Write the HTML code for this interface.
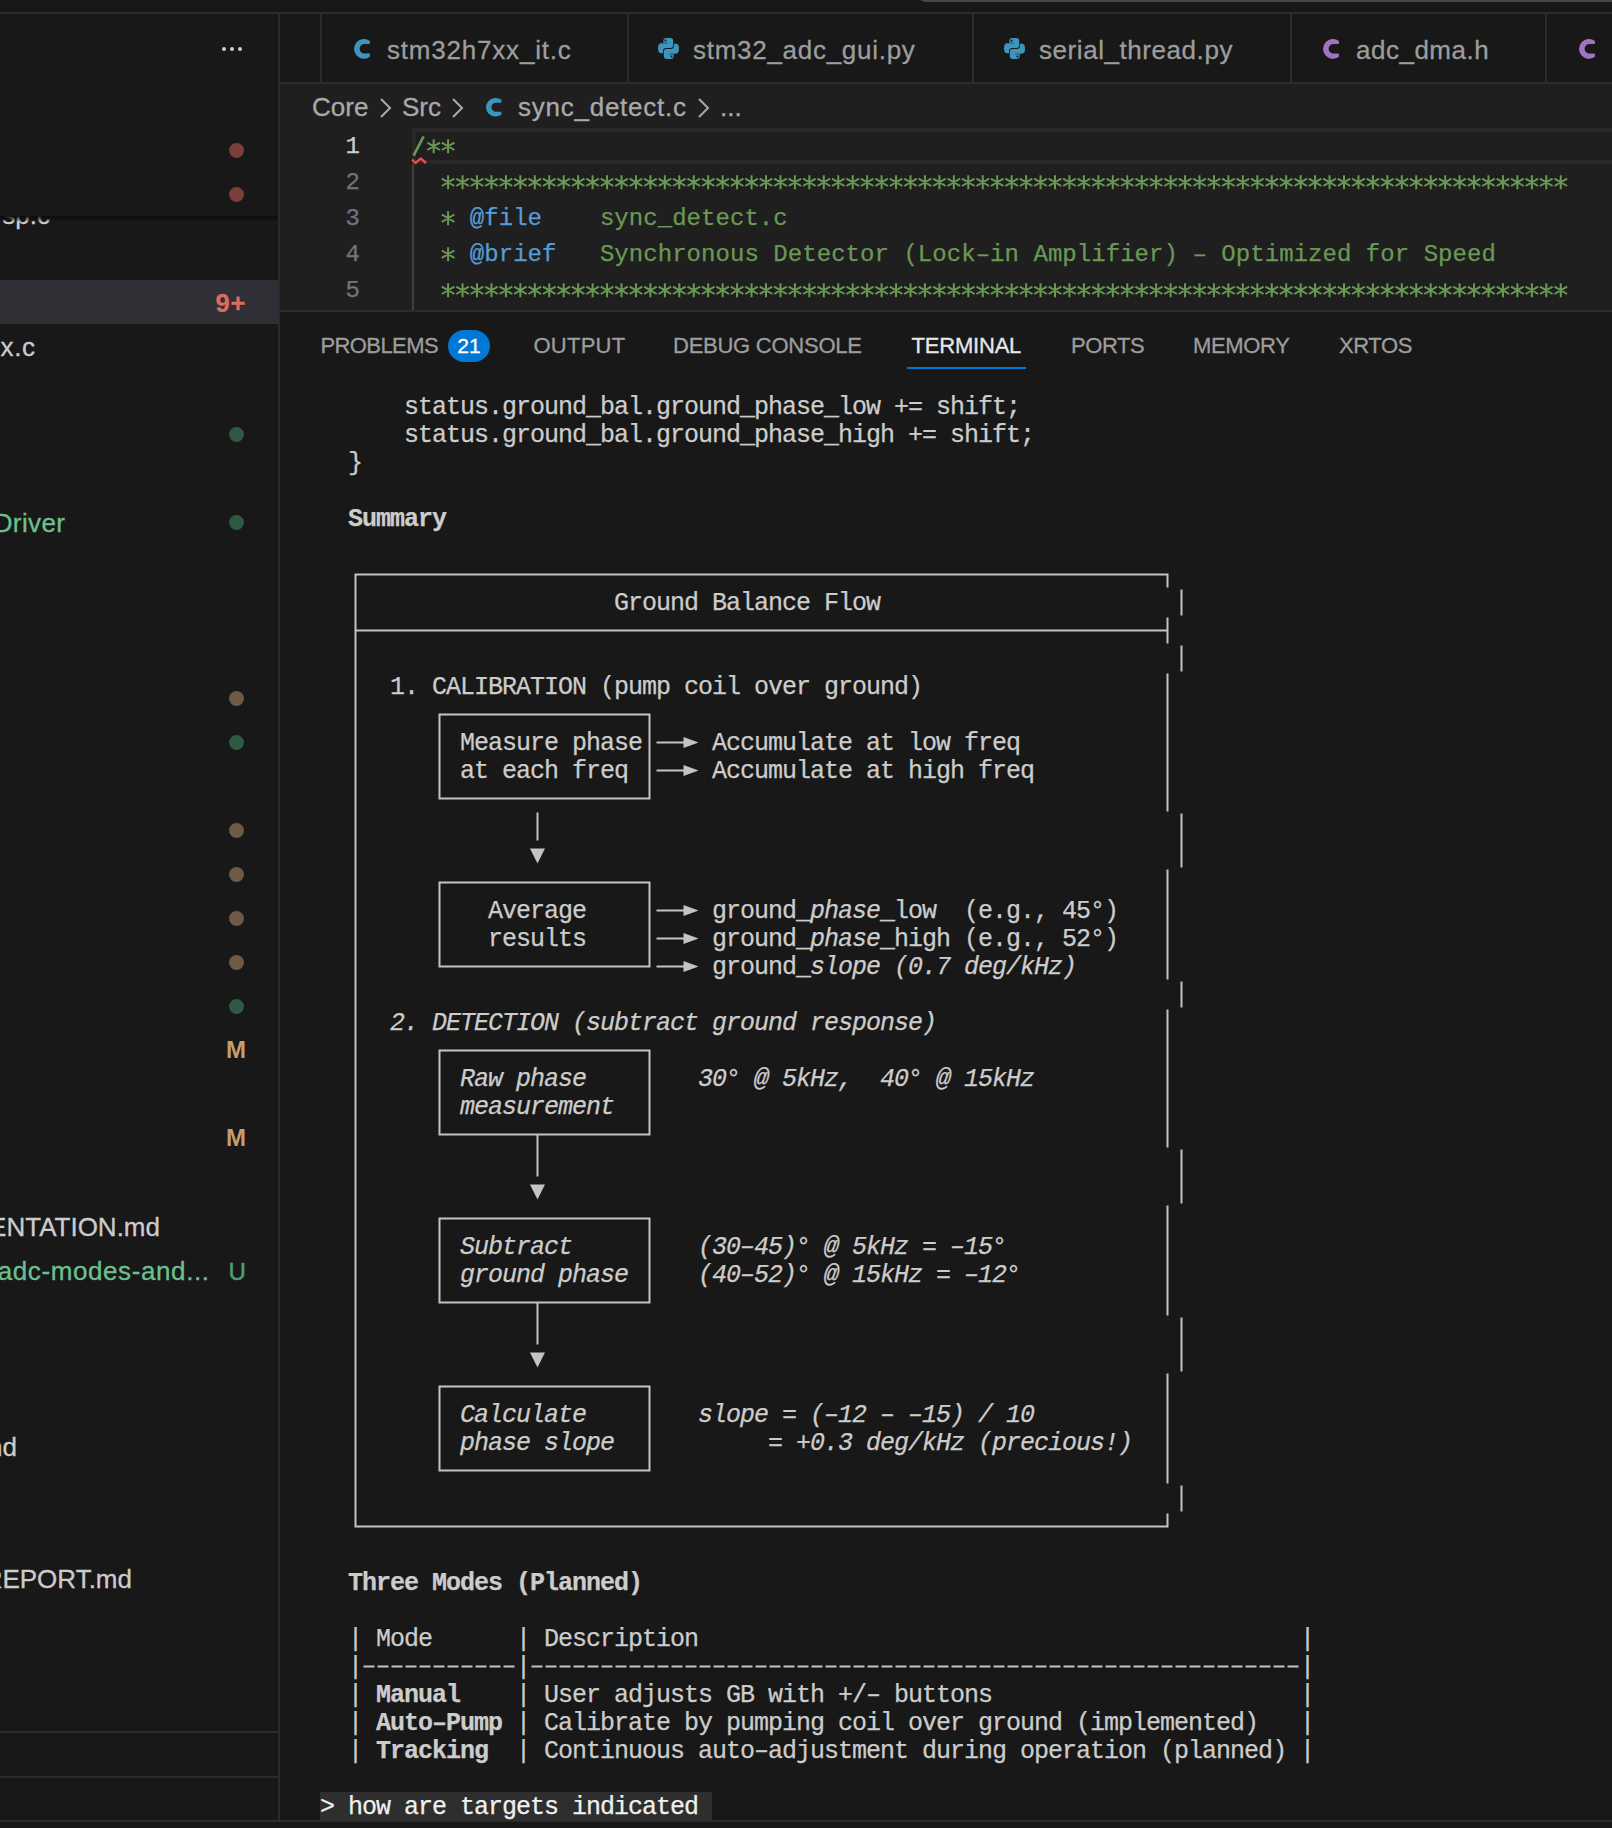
<!DOCTYPE html><html><head><meta charset="utf-8"><style>
*{margin:0;padding:0;box-sizing:border-box}
html,body{width:1612px;height:1828px;overflow:hidden;background:#181818}
body{position:relative;font-family:"Liberation Sans",sans-serif;color:#cccccc}
.a{position:absolute}
.ui{font-family:"Liberation Sans",sans-serif;white-space:pre;-webkit-text-stroke:0.3px currentColor}
.mono{font-family:"Liberation Mono",monospace;white-space:pre;-webkit-text-stroke:0.25px currentColor}
.t{-webkit-text-stroke:0.25px currentColor;position:absolute;font-family:"Liberation Mono",monospace;white-space:pre;font-size:25px;letter-spacing:-1.0px;line-height:28px;height:28px;color:#cccccc}
.t i{font-style:italic}
.t b{font-weight:bold}
.dot{position:absolute;width:15px;height:15px;border-radius:50%}
</style></head><body>
<div class="a" style="left:917px;top:-20px;width:760px;height:22px;background:#474747;border-radius:9px"></div>
<div class="a" style="left:0;top:12px;width:1612px;height:2px;background:#2b2b2b"></div>
<div class="a" style="left:278px;top:14px;width:2px;height:1807px;background:#2b2b2b"></div>
<div class="a" style="left:222px;top:47px;width:4px;height:4px;border-radius:50%;background:#cccccc;box-shadow:8px 0 0 #cccccc,16px 0 0 #cccccc"></div>
<div class="a ui" style="right:1562px;top:200.99px;font-size:26px;line-height:28px;letter-spacing:0px;color:#cccccc">sp.c</div>
<div class="a" style="left:0;top:280px;width:278px;height:44px;background:#2f2f35"></div>
<div class="a ui" style="left:215.5px;top:289px;font-size:25.5px;line-height:28px;font-weight:bold;letter-spacing:0.8px;color:#dd6b5f">9+</div>
<div class="a ui" style="right:1576.4px;top:332.99px;font-size:26px;line-height:28px;letter-spacing:0.6px;color:#cccccc">x.c</div>
<div class="a ui" style="right:1546.6px;top:508.99px;font-size:26px;line-height:28px;letter-spacing:0.4px;color:#6cc08f">Driver</div>
<div class="a ui" style="right:1452px;top:1212.99px;font-size:26px;line-height:28px;letter-spacing:0px;color:#cccccc">ENTATION.md</div>
<div class="a ui" style="right:1402.4px;top:1256.99px;font-size:26px;line-height:28px;letter-spacing:0.6px;color:#6cc08f">adc-modes-and...</div>
<div class="a ui" style="left:228.5px;top:1258px;font-size:24px;line-height:28px;-webkit-text-stroke:0.5px #4f9f6e;color:#4f9f6e">U</div>
<div class="a ui" style="right:1595px;top:1432.99px;font-size:26px;line-height:28px;letter-spacing:0px;color:#cccccc">and</div>
<div class="a ui" style="right:1480px;top:1564.99px;font-size:26px;line-height:28px;letter-spacing:0px;color:#cccccc">REPORT.md</div>
<div class="dot" style="left:228.5px;top:426.5px;background:#2e5a44"></div>
<div class="dot" style="left:228.5px;top:514.5px;background:#2e5a44"></div>
<div class="dot" style="left:228.5px;top:734.5px;background:#2e5a44"></div>
<div class="dot" style="left:228.5px;top:998.5px;background:#2e5a44"></div>
<div class="dot" style="left:228.5px;top:690.5px;background:#6e5a45"></div>
<div class="dot" style="left:228.5px;top:822.5px;background:#6e5a45"></div>
<div class="dot" style="left:228.5px;top:866.5px;background:#6e5a45"></div>
<div class="dot" style="left:228.5px;top:910.5px;background:#6e5a45"></div>
<div class="dot" style="left:228.5px;top:954.5px;background:#6e5a45"></div>
<div class="a ui" style="left:226px;top:1036px;font-size:24px;line-height:28px;font-weight:bold;-webkit-text-stroke:0;color:#c29f6c">M</div>
<div class="a ui" style="left:226px;top:1124px;font-size:24px;line-height:28px;font-weight:bold;-webkit-text-stroke:0;color:#c29f6c">M</div>
<div class="a" style="left:0;top:84px;width:278px;height:132px;background:#181818"></div>
<div class="a" style="left:0;top:216px;width:278px;height:6px;background:linear-gradient(#0c0c0c,rgba(12,12,12,0))"></div>
<div class="dot" style="left:228.5px;top:142.5px;background:#7a3f3a"></div>
<div class="dot" style="left:228.5px;top:186.5px;background:#7a3f3a"></div>
<div class="a" style="left:0;top:1731px;width:278px;height:2px;background:#2b2b2b"></div>
<div class="a" style="left:0;top:1776px;width:278px;height:2px;background:#2b2b2b"></div>
<div class="a" style="left:0;top:1820px;width:1612px;height:2px;background:#2b2b2b"></div>
<div class="a" style="left:320px;top:14px;width:2px;height:68px;background:#2b2b2b"></div>
<div class="a" style="left:627px;top:14px;width:2px;height:68px;background:#2b2b2b"></div>
<div class="a" style="left:972px;top:14px;width:2px;height:68px;background:#2b2b2b"></div>
<div class="a" style="left:1290px;top:14px;width:2px;height:68px;background:#2b2b2b"></div>
<div class="a" style="left:1545px;top:14px;width:2px;height:68px;background:#2b2b2b"></div>
<div class="a" style="left:280px;top:82px;width:1332px;height:2px;background:#2b2b2b"></div>
<svg class="a" style="left:354px;top:38.5px;overflow:visible" width="16" height="19.7" viewBox="0 0 16 20" preserveAspectRatio="none"><path d="M15.9 1.93 A10 10 0 1 0 15.9 18.07 L15.9 14.8 L10.4 14.8 A4.8 4.8 0 1 1 10.4 5.2 L15.9 5.2 Z" fill="#3d94bd"/></svg>
<div class="a ui" style="left:387px;top:36.49px;font-size:26px;line-height:28px;letter-spacing:0.8px;color:#9d9d9d">stm32h7xx_it.c</div>
<svg class="a" style="left:658px;top:38px" width="21" height="21" viewBox="0 0 21 21"><path d="M5.3 3 Q5.3 0 8.3 0 L12.2 0 Q15.2 0 15.2 3 L15.2 7.3 Q15.2 10 12.4 10 L8.3 10 Q5 10 5 13.2 L5 15.2 L3 15.2 Q0 15.2 0 10.2 Q0 5.3 3.2 5.3 L10 5.3 L10 4.7 L5.3 4.7 Z" fill="#3d94bd"/><path d="M5.3 3 Q5.3 0 8.3 0 L12.2 0 Q15.2 0 15.2 3 L15.2 7.3 Q15.2 10 12.4 10 L8.3 10 Q5 10 5 13.2 L5 15.2 L3 15.2 Q0 15.2 0 10.2 Q0 5.3 3.2 5.3 L10 5.3 L10 4.7 L5.3 4.7 Z" fill="#3d94bd" transform="rotate(180 10.5 10.5)"/><circle cx="7.5" cy="2.5" r="1" fill="#181818"/><circle cx="13.5" cy="18.5" r="1" fill="#181818"/></svg>
<div class="a ui" style="left:693px;top:36.49px;font-size:26px;line-height:28px;letter-spacing:0.72px;color:#9d9d9d">stm32_adc_gui.py</div>
<svg class="a" style="left:1003.5px;top:38px" width="21" height="21" viewBox="0 0 21 21"><path d="M5.3 3 Q5.3 0 8.3 0 L12.2 0 Q15.2 0 15.2 3 L15.2 7.3 Q15.2 10 12.4 10 L8.3 10 Q5 10 5 13.2 L5 15.2 L3 15.2 Q0 15.2 0 10.2 Q0 5.3 3.2 5.3 L10 5.3 L10 4.7 L5.3 4.7 Z" fill="#3d94bd"/><path d="M5.3 3 Q5.3 0 8.3 0 L12.2 0 Q15.2 0 15.2 3 L15.2 7.3 Q15.2 10 12.4 10 L8.3 10 Q5 10 5 13.2 L5 15.2 L3 15.2 Q0 15.2 0 10.2 Q0 5.3 3.2 5.3 L10 5.3 L10 4.7 L5.3 4.7 Z" fill="#3d94bd" transform="rotate(180 10.5 10.5)"/><circle cx="7.5" cy="2.5" r="1" fill="#181818"/><circle cx="13.5" cy="18.5" r="1" fill="#181818"/></svg>
<div class="a ui" style="left:1039px;top:36.49px;font-size:26px;line-height:28px;letter-spacing:0.56px;color:#9d9d9d">serial_thread.py</div>
<svg class="a" style="left:1323px;top:38.5px;overflow:visible" width="16" height="19.7" viewBox="0 0 16 20" preserveAspectRatio="none"><path d="M15.9 1.93 A10 10 0 1 0 15.9 18.07 L15.9 14.8 L10.4 14.8 A4.8 4.8 0 1 1 10.4 5.2 L15.9 5.2 Z" fill="#a074c4"/></svg>
<div class="a ui" style="left:1356px;top:36.49px;font-size:26px;line-height:28px;letter-spacing:0.5px;color:#9d9d9d">adc_dma.h</div>
<svg class="a" style="left:1579px;top:38.5px;overflow:visible" width="16" height="19.7" viewBox="0 0 16 20" preserveAspectRatio="none"><path d="M15.9 1.93 A10 10 0 1 0 15.9 18.07 L15.9 14.8 L10.4 14.8 A4.8 4.8 0 1 1 10.4 5.2 L15.9 5.2 Z" fill="#a074c4"/></svg>
<div class="a" style="left:280px;top:84px;width:1332px;height:226px;background:#1f1f1f"></div>
<div class="a ui" style="left:312px;top:92.79px;font-size:26px;line-height:28px;letter-spacing:0px;color:#a9a9a9">Core</div>
<svg class="a" style="left:379px;top:97px" width="14" height="22" viewBox="0 0 14 22"><path d="M2 2 L11 11 L2 20" fill="none" stroke="#a9a9a9" stroke-width="2"/></svg>
<div class="a ui" style="left:402px;top:92.79px;font-size:26px;line-height:28px;letter-spacing:0px;color:#a9a9a9">Src</div>
<svg class="a" style="left:451px;top:97px" width="14" height="22" viewBox="0 0 14 22"><path d="M2 2 L11 11 L2 20" fill="none" stroke="#a9a9a9" stroke-width="2"/></svg>
<svg class="a" style="left:486px;top:97.5px;overflow:visible" width="15.5" height="18.5" viewBox="0 0 16 20" preserveAspectRatio="none"><path d="M15.9 1.93 A10 10 0 1 0 15.9 18.07 L15.9 14.8 L10.4 14.8 A4.8 4.8 0 1 1 10.4 5.2 L15.9 5.2 Z" fill="#3d94bd"/></svg>
<div class="a ui" style="left:518px;top:92.79px;font-size:26px;line-height:28px;letter-spacing:0.75px;color:#a9a9a9">sync_detect.c</div>
<svg class="a" style="left:697px;top:97px" width="14" height="22" viewBox="0 0 14 22"><path d="M2 2 L11 11 L2 20" fill="none" stroke="#a9a9a9" stroke-width="2"/></svg>
<div class="a ui" style="left:720px;top:92.79px;font-size:26px;line-height:28px;letter-spacing:0px;color:#a9a9a9">...</div>
<div class="a" style="left:412px;top:128px;width:1200px;height:36px;border:4px solid #282828;border-right:none"></div>
<div class="a" style="left:412px;top:164px;width:2px;height:146px;background:#404040"></div>
<div class="a mono" style="right:1252px;top:129.21px;font-size:24px;line-height:36px;color:#cccccc">1</div>
<div class="a mono" style="left:412px;top:129.21px;font-size:24px;line-height:36px;letter-spacing:0.05px"><span style="color:#6a9955">   </span></div>
<div class="a mono" style="right:1252px;top:165.21px;font-size:24px;line-height:36px;color:#6e7681">2</div>
<div class="a mono" style="left:412px;top:165.21px;font-size:24px;line-height:36px;letter-spacing:0.05px"><span style="color:#6a9955"></span></div>
<div class="a mono" style="right:1252px;top:201.21px;font-size:24px;line-height:36px;color:#6e7681">3</div>
<div class="a mono" style="left:412px;top:201.21px;font-size:24px;line-height:36px;letter-spacing:0.05px"><span style="color:#6a9955">    </span><span style="color:#569cd6">@file</span><span style="color:#6a9955">    sync_detect.c</span></div>
<div class="a mono" style="right:1252px;top:237.21px;font-size:24px;line-height:36px;color:#6e7681">4</div>
<div class="a mono" style="left:412px;top:237.21px;font-size:24px;line-height:36px;letter-spacing:0.05px"><span style="color:#6a9955">    </span><span style="color:#569cd6">@brief</span><span style="color:#6a9955">   Synchronous Detector (Lock–in Amplifier) – Optimized for Speed</span></div>
<div class="a mono" style="right:1252px;top:273.21px;font-size:24px;line-height:36px;color:#6e7681">5</div>
<div class="a mono" style="left:412px;top:273.21px;font-size:24px;line-height:36px;letter-spacing:0.05px"><span style="color:#6a9955"></span></div>
<svg class="a" style="left:0;top:0" width="1612" height="320"><path d="M433.65 139.3 V153.3 M427.35 142.60000000000002 L439.95 150.0 M427.35 150.0 L439.95 142.60000000000002 M448.10 139.3 V153.3 M441.80 142.60000000000002 L454.40 150.0 M441.80 150.0 L454.40 142.60000000000002 M448.10 175.3 V189.3 M441.80 178.60000000000002 L454.40 186.0 M441.80 186.0 L454.40 178.60000000000002 M448.10 283.3 V297.3 M441.80 286.6 L454.40 294.0 M441.80 294.0 L454.40 286.6 M462.55 175.3 V189.3 M456.25 178.60000000000002 L468.85 186.0 M456.25 186.0 L468.85 178.60000000000002 M462.55 283.3 V297.3 M456.25 286.6 L468.85 294.0 M456.25 294.0 L468.85 286.6 M477.00 175.3 V189.3 M470.70 178.60000000000002 L483.30 186.0 M470.70 186.0 L483.30 178.60000000000002 M477.00 283.3 V297.3 M470.70 286.6 L483.30 294.0 M470.70 294.0 L483.30 286.6 M491.45 175.3 V189.3 M485.15 178.60000000000002 L497.75 186.0 M485.15 186.0 L497.75 178.60000000000002 M491.45 283.3 V297.3 M485.15 286.6 L497.75 294.0 M485.15 294.0 L497.75 286.6 M505.90 175.3 V189.3 M499.60 178.60000000000002 L512.20 186.0 M499.60 186.0 L512.20 178.60000000000002 M505.90 283.3 V297.3 M499.60 286.6 L512.20 294.0 M499.60 294.0 L512.20 286.6 M520.35 175.3 V189.3 M514.05 178.60000000000002 L526.65 186.0 M514.05 186.0 L526.65 178.60000000000002 M520.35 283.3 V297.3 M514.05 286.6 L526.65 294.0 M514.05 294.0 L526.65 286.6 M534.80 175.3 V189.3 M528.50 178.60000000000002 L541.10 186.0 M528.50 186.0 L541.10 178.60000000000002 M534.80 283.3 V297.3 M528.50 286.6 L541.10 294.0 M528.50 294.0 L541.10 286.6 M549.25 175.3 V189.3 M542.95 178.60000000000002 L555.55 186.0 M542.95 186.0 L555.55 178.60000000000002 M549.25 283.3 V297.3 M542.95 286.6 L555.55 294.0 M542.95 294.0 L555.55 286.6 M563.70 175.3 V189.3 M557.40 178.60000000000002 L570.00 186.0 M557.40 186.0 L570.00 178.60000000000002 M563.70 283.3 V297.3 M557.40 286.6 L570.00 294.0 M557.40 294.0 L570.00 286.6 M578.15 175.3 V189.3 M571.85 178.60000000000002 L584.45 186.0 M571.85 186.0 L584.45 178.60000000000002 M578.15 283.3 V297.3 M571.85 286.6 L584.45 294.0 M571.85 294.0 L584.45 286.6 M592.60 175.3 V189.3 M586.30 178.60000000000002 L598.90 186.0 M586.30 186.0 L598.90 178.60000000000002 M592.60 283.3 V297.3 M586.30 286.6 L598.90 294.0 M586.30 294.0 L598.90 286.6 M607.05 175.3 V189.3 M600.75 178.60000000000002 L613.35 186.0 M600.75 186.0 L613.35 178.60000000000002 M607.05 283.3 V297.3 M600.75 286.6 L613.35 294.0 M600.75 294.0 L613.35 286.6 M621.50 175.3 V189.3 M615.20 178.60000000000002 L627.80 186.0 M615.20 186.0 L627.80 178.60000000000002 M621.50 283.3 V297.3 M615.20 286.6 L627.80 294.0 M615.20 294.0 L627.80 286.6 M635.95 175.3 V189.3 M629.65 178.60000000000002 L642.25 186.0 M629.65 186.0 L642.25 178.60000000000002 M635.95 283.3 V297.3 M629.65 286.6 L642.25 294.0 M629.65 294.0 L642.25 286.6 M650.40 175.3 V189.3 M644.10 178.60000000000002 L656.70 186.0 M644.10 186.0 L656.70 178.60000000000002 M650.40 283.3 V297.3 M644.10 286.6 L656.70 294.0 M644.10 294.0 L656.70 286.6 M664.85 175.3 V189.3 M658.55 178.60000000000002 L671.15 186.0 M658.55 186.0 L671.15 178.60000000000002 M664.85 283.3 V297.3 M658.55 286.6 L671.15 294.0 M658.55 294.0 L671.15 286.6 M679.30 175.3 V189.3 M673.00 178.60000000000002 L685.60 186.0 M673.00 186.0 L685.60 178.60000000000002 M679.30 283.3 V297.3 M673.00 286.6 L685.60 294.0 M673.00 294.0 L685.60 286.6 M693.75 175.3 V189.3 M687.45 178.60000000000002 L700.05 186.0 M687.45 186.0 L700.05 178.60000000000002 M693.75 283.3 V297.3 M687.45 286.6 L700.05 294.0 M687.45 294.0 L700.05 286.6 M708.20 175.3 V189.3 M701.90 178.60000000000002 L714.50 186.0 M701.90 186.0 L714.50 178.60000000000002 M708.20 283.3 V297.3 M701.90 286.6 L714.50 294.0 M701.90 294.0 L714.50 286.6 M722.65 175.3 V189.3 M716.35 178.60000000000002 L728.95 186.0 M716.35 186.0 L728.95 178.60000000000002 M722.65 283.3 V297.3 M716.35 286.6 L728.95 294.0 M716.35 294.0 L728.95 286.6 M737.10 175.3 V189.3 M730.80 178.60000000000002 L743.40 186.0 M730.80 186.0 L743.40 178.60000000000002 M737.10 283.3 V297.3 M730.80 286.6 L743.40 294.0 M730.80 294.0 L743.40 286.6 M751.55 175.3 V189.3 M745.25 178.60000000000002 L757.85 186.0 M745.25 186.0 L757.85 178.60000000000002 M751.55 283.3 V297.3 M745.25 286.6 L757.85 294.0 M745.25 294.0 L757.85 286.6 M766.00 175.3 V189.3 M759.70 178.60000000000002 L772.30 186.0 M759.70 186.0 L772.30 178.60000000000002 M766.00 283.3 V297.3 M759.70 286.6 L772.30 294.0 M759.70 294.0 L772.30 286.6 M780.45 175.3 V189.3 M774.15 178.60000000000002 L786.75 186.0 M774.15 186.0 L786.75 178.60000000000002 M780.45 283.3 V297.3 M774.15 286.6 L786.75 294.0 M774.15 294.0 L786.75 286.6 M794.90 175.3 V189.3 M788.60 178.60000000000002 L801.20 186.0 M788.60 186.0 L801.20 178.60000000000002 M794.90 283.3 V297.3 M788.60 286.6 L801.20 294.0 M788.60 294.0 L801.20 286.6 M809.35 175.3 V189.3 M803.05 178.60000000000002 L815.65 186.0 M803.05 186.0 L815.65 178.60000000000002 M809.35 283.3 V297.3 M803.05 286.6 L815.65 294.0 M803.05 294.0 L815.65 286.6 M823.80 175.3 V189.3 M817.50 178.60000000000002 L830.10 186.0 M817.50 186.0 L830.10 178.60000000000002 M823.80 283.3 V297.3 M817.50 286.6 L830.10 294.0 M817.50 294.0 L830.10 286.6 M838.25 175.3 V189.3 M831.95 178.60000000000002 L844.55 186.0 M831.95 186.0 L844.55 178.60000000000002 M838.25 283.3 V297.3 M831.95 286.6 L844.55 294.0 M831.95 294.0 L844.55 286.6 M852.70 175.3 V189.3 M846.40 178.60000000000002 L859.00 186.0 M846.40 186.0 L859.00 178.60000000000002 M852.70 283.3 V297.3 M846.40 286.6 L859.00 294.0 M846.40 294.0 L859.00 286.6 M867.15 175.3 V189.3 M860.85 178.60000000000002 L873.45 186.0 M860.85 186.0 L873.45 178.60000000000002 M867.15 283.3 V297.3 M860.85 286.6 L873.45 294.0 M860.85 294.0 L873.45 286.6 M881.60 175.3 V189.3 M875.30 178.60000000000002 L887.90 186.0 M875.30 186.0 L887.90 178.60000000000002 M881.60 283.3 V297.3 M875.30 286.6 L887.90 294.0 M875.30 294.0 L887.90 286.6 M896.05 175.3 V189.3 M889.75 178.60000000000002 L902.35 186.0 M889.75 186.0 L902.35 178.60000000000002 M896.05 283.3 V297.3 M889.75 286.6 L902.35 294.0 M889.75 294.0 L902.35 286.6 M910.50 175.3 V189.3 M904.20 178.60000000000002 L916.80 186.0 M904.20 186.0 L916.80 178.60000000000002 M910.50 283.3 V297.3 M904.20 286.6 L916.80 294.0 M904.20 294.0 L916.80 286.6 M924.95 175.3 V189.3 M918.65 178.60000000000002 L931.25 186.0 M918.65 186.0 L931.25 178.60000000000002 M924.95 283.3 V297.3 M918.65 286.6 L931.25 294.0 M918.65 294.0 L931.25 286.6 M939.40 175.3 V189.3 M933.10 178.60000000000002 L945.70 186.0 M933.10 186.0 L945.70 178.60000000000002 M939.40 283.3 V297.3 M933.10 286.6 L945.70 294.0 M933.10 294.0 L945.70 286.6 M953.85 175.3 V189.3 M947.55 178.60000000000002 L960.15 186.0 M947.55 186.0 L960.15 178.60000000000002 M953.85 283.3 V297.3 M947.55 286.6 L960.15 294.0 M947.55 294.0 L960.15 286.6 M968.30 175.3 V189.3 M962.00 178.60000000000002 L974.60 186.0 M962.00 186.0 L974.60 178.60000000000002 M968.30 283.3 V297.3 M962.00 286.6 L974.60 294.0 M962.00 294.0 L974.60 286.6 M982.75 175.3 V189.3 M976.45 178.60000000000002 L989.05 186.0 M976.45 186.0 L989.05 178.60000000000002 M982.75 283.3 V297.3 M976.45 286.6 L989.05 294.0 M976.45 294.0 L989.05 286.6 M997.20 175.3 V189.3 M990.90 178.60000000000002 L1003.50 186.0 M990.90 186.0 L1003.50 178.60000000000002 M997.20 283.3 V297.3 M990.90 286.6 L1003.50 294.0 M990.90 294.0 L1003.50 286.6 M1011.65 175.3 V189.3 M1005.35 178.60000000000002 L1017.95 186.0 M1005.35 186.0 L1017.95 178.60000000000002 M1011.65 283.3 V297.3 M1005.35 286.6 L1017.95 294.0 M1005.35 294.0 L1017.95 286.6 M1026.10 175.3 V189.3 M1019.80 178.60000000000002 L1032.40 186.0 M1019.80 186.0 L1032.40 178.60000000000002 M1026.10 283.3 V297.3 M1019.80 286.6 L1032.40 294.0 M1019.80 294.0 L1032.40 286.6 M1040.55 175.3 V189.3 M1034.25 178.60000000000002 L1046.85 186.0 M1034.25 186.0 L1046.85 178.60000000000002 M1040.55 283.3 V297.3 M1034.25 286.6 L1046.85 294.0 M1034.25 294.0 L1046.85 286.6 M1055.00 175.3 V189.3 M1048.70 178.60000000000002 L1061.30 186.0 M1048.70 186.0 L1061.30 178.60000000000002 M1055.00 283.3 V297.3 M1048.70 286.6 L1061.30 294.0 M1048.70 294.0 L1061.30 286.6 M1069.45 175.3 V189.3 M1063.15 178.60000000000002 L1075.75 186.0 M1063.15 186.0 L1075.75 178.60000000000002 M1069.45 283.3 V297.3 M1063.15 286.6 L1075.75 294.0 M1063.15 294.0 L1075.75 286.6 M1083.90 175.3 V189.3 M1077.60 178.60000000000002 L1090.20 186.0 M1077.60 186.0 L1090.20 178.60000000000002 M1083.90 283.3 V297.3 M1077.60 286.6 L1090.20 294.0 M1077.60 294.0 L1090.20 286.6 M1098.35 175.3 V189.3 M1092.05 178.60000000000002 L1104.65 186.0 M1092.05 186.0 L1104.65 178.60000000000002 M1098.35 283.3 V297.3 M1092.05 286.6 L1104.65 294.0 M1092.05 294.0 L1104.65 286.6 M1112.80 175.3 V189.3 M1106.50 178.60000000000002 L1119.10 186.0 M1106.50 186.0 L1119.10 178.60000000000002 M1112.80 283.3 V297.3 M1106.50 286.6 L1119.10 294.0 M1106.50 294.0 L1119.10 286.6 M1127.25 175.3 V189.3 M1120.95 178.60000000000002 L1133.55 186.0 M1120.95 186.0 L1133.55 178.60000000000002 M1127.25 283.3 V297.3 M1120.95 286.6 L1133.55 294.0 M1120.95 294.0 L1133.55 286.6 M1141.70 175.3 V189.3 M1135.40 178.60000000000002 L1148.00 186.0 M1135.40 186.0 L1148.00 178.60000000000002 M1141.70 283.3 V297.3 M1135.40 286.6 L1148.00 294.0 M1135.40 294.0 L1148.00 286.6 M1156.15 175.3 V189.3 M1149.85 178.60000000000002 L1162.45 186.0 M1149.85 186.0 L1162.45 178.60000000000002 M1156.15 283.3 V297.3 M1149.85 286.6 L1162.45 294.0 M1149.85 294.0 L1162.45 286.6 M1170.60 175.3 V189.3 M1164.30 178.60000000000002 L1176.90 186.0 M1164.30 186.0 L1176.90 178.60000000000002 M1170.60 283.3 V297.3 M1164.30 286.6 L1176.90 294.0 M1164.30 294.0 L1176.90 286.6 M1185.05 175.3 V189.3 M1178.75 178.60000000000002 L1191.35 186.0 M1178.75 186.0 L1191.35 178.60000000000002 M1185.05 283.3 V297.3 M1178.75 286.6 L1191.35 294.0 M1178.75 294.0 L1191.35 286.6 M1199.50 175.3 V189.3 M1193.20 178.60000000000002 L1205.80 186.0 M1193.20 186.0 L1205.80 178.60000000000002 M1199.50 283.3 V297.3 M1193.20 286.6 L1205.80 294.0 M1193.20 294.0 L1205.80 286.6 M1213.95 175.3 V189.3 M1207.65 178.60000000000002 L1220.25 186.0 M1207.65 186.0 L1220.25 178.60000000000002 M1213.95 283.3 V297.3 M1207.65 286.6 L1220.25 294.0 M1207.65 294.0 L1220.25 286.6 M1228.40 175.3 V189.3 M1222.10 178.60000000000002 L1234.70 186.0 M1222.10 186.0 L1234.70 178.60000000000002 M1228.40 283.3 V297.3 M1222.10 286.6 L1234.70 294.0 M1222.10 294.0 L1234.70 286.6 M1242.85 175.3 V189.3 M1236.55 178.60000000000002 L1249.15 186.0 M1236.55 186.0 L1249.15 178.60000000000002 M1242.85 283.3 V297.3 M1236.55 286.6 L1249.15 294.0 M1236.55 294.0 L1249.15 286.6 M1257.30 175.3 V189.3 M1251.00 178.60000000000002 L1263.60 186.0 M1251.00 186.0 L1263.60 178.60000000000002 M1257.30 283.3 V297.3 M1251.00 286.6 L1263.60 294.0 M1251.00 294.0 L1263.60 286.6 M1271.75 175.3 V189.3 M1265.45 178.60000000000002 L1278.05 186.0 M1265.45 186.0 L1278.05 178.60000000000002 M1271.75 283.3 V297.3 M1265.45 286.6 L1278.05 294.0 M1265.45 294.0 L1278.05 286.6 M1286.20 175.3 V189.3 M1279.90 178.60000000000002 L1292.50 186.0 M1279.90 186.0 L1292.50 178.60000000000002 M1286.20 283.3 V297.3 M1279.90 286.6 L1292.50 294.0 M1279.90 294.0 L1292.50 286.6 M1300.65 175.3 V189.3 M1294.35 178.60000000000002 L1306.95 186.0 M1294.35 186.0 L1306.95 178.60000000000002 M1300.65 283.3 V297.3 M1294.35 286.6 L1306.95 294.0 M1294.35 294.0 L1306.95 286.6 M1315.10 175.3 V189.3 M1308.80 178.60000000000002 L1321.40 186.0 M1308.80 186.0 L1321.40 178.60000000000002 M1315.10 283.3 V297.3 M1308.80 286.6 L1321.40 294.0 M1308.80 294.0 L1321.40 286.6 M1329.55 175.3 V189.3 M1323.25 178.60000000000002 L1335.85 186.0 M1323.25 186.0 L1335.85 178.60000000000002 M1329.55 283.3 V297.3 M1323.25 286.6 L1335.85 294.0 M1323.25 294.0 L1335.85 286.6 M1344.00 175.3 V189.3 M1337.70 178.60000000000002 L1350.30 186.0 M1337.70 186.0 L1350.30 178.60000000000002 M1344.00 283.3 V297.3 M1337.70 286.6 L1350.30 294.0 M1337.70 294.0 L1350.30 286.6 M1358.45 175.3 V189.3 M1352.15 178.60000000000002 L1364.75 186.0 M1352.15 186.0 L1364.75 178.60000000000002 M1358.45 283.3 V297.3 M1352.15 286.6 L1364.75 294.0 M1352.15 294.0 L1364.75 286.6 M1372.90 175.3 V189.3 M1366.60 178.60000000000002 L1379.20 186.0 M1366.60 186.0 L1379.20 178.60000000000002 M1372.90 283.3 V297.3 M1366.60 286.6 L1379.20 294.0 M1366.60 294.0 L1379.20 286.6 M1387.35 175.3 V189.3 M1381.05 178.60000000000002 L1393.65 186.0 M1381.05 186.0 L1393.65 178.60000000000002 M1387.35 283.3 V297.3 M1381.05 286.6 L1393.65 294.0 M1381.05 294.0 L1393.65 286.6 M1401.80 175.3 V189.3 M1395.50 178.60000000000002 L1408.10 186.0 M1395.50 186.0 L1408.10 178.60000000000002 M1401.80 283.3 V297.3 M1395.50 286.6 L1408.10 294.0 M1395.50 294.0 L1408.10 286.6 M1416.25 175.3 V189.3 M1409.95 178.60000000000002 L1422.55 186.0 M1409.95 186.0 L1422.55 178.60000000000002 M1416.25 283.3 V297.3 M1409.95 286.6 L1422.55 294.0 M1409.95 294.0 L1422.55 286.6 M1430.70 175.3 V189.3 M1424.40 178.60000000000002 L1437.00 186.0 M1424.40 186.0 L1437.00 178.60000000000002 M1430.70 283.3 V297.3 M1424.40 286.6 L1437.00 294.0 M1424.40 294.0 L1437.00 286.6 M1445.15 175.3 V189.3 M1438.85 178.60000000000002 L1451.45 186.0 M1438.85 186.0 L1451.45 178.60000000000002 M1445.15 283.3 V297.3 M1438.85 286.6 L1451.45 294.0 M1438.85 294.0 L1451.45 286.6 M1459.60 175.3 V189.3 M1453.30 178.60000000000002 L1465.90 186.0 M1453.30 186.0 L1465.90 178.60000000000002 M1459.60 283.3 V297.3 M1453.30 286.6 L1465.90 294.0 M1453.30 294.0 L1465.90 286.6 M1474.05 175.3 V189.3 M1467.75 178.60000000000002 L1480.35 186.0 M1467.75 186.0 L1480.35 178.60000000000002 M1474.05 283.3 V297.3 M1467.75 286.6 L1480.35 294.0 M1467.75 294.0 L1480.35 286.6 M1488.50 175.3 V189.3 M1482.20 178.60000000000002 L1494.80 186.0 M1482.20 186.0 L1494.80 178.60000000000002 M1488.50 283.3 V297.3 M1482.20 286.6 L1494.80 294.0 M1482.20 294.0 L1494.80 286.6 M1502.95 175.3 V189.3 M1496.65 178.60000000000002 L1509.25 186.0 M1496.65 186.0 L1509.25 178.60000000000002 M1502.95 283.3 V297.3 M1496.65 286.6 L1509.25 294.0 M1496.65 294.0 L1509.25 286.6 M1517.40 175.3 V189.3 M1511.10 178.60000000000002 L1523.70 186.0 M1511.10 186.0 L1523.70 178.60000000000002 M1517.40 283.3 V297.3 M1511.10 286.6 L1523.70 294.0 M1511.10 294.0 L1523.70 286.6 M1531.85 175.3 V189.3 M1525.55 178.60000000000002 L1538.15 186.0 M1525.55 186.0 L1538.15 178.60000000000002 M1531.85 283.3 V297.3 M1525.55 286.6 L1538.15 294.0 M1525.55 294.0 L1538.15 286.6 M1546.30 175.3 V189.3 M1540.00 178.60000000000002 L1552.60 186.0 M1540.00 186.0 L1552.60 178.60000000000002 M1546.30 283.3 V297.3 M1540.00 286.6 L1552.60 294.0 M1540.00 294.0 L1552.60 286.6 M1560.75 175.3 V189.3 M1554.45 178.60000000000002 L1567.05 186.0 M1554.45 186.0 L1567.05 178.60000000000002 M1560.75 283.3 V297.3 M1554.45 286.6 L1567.05 294.0 M1554.45 294.0 L1567.05 286.6 M448.10 211.2 V225.2 M441.80 214.5 L454.40 221.89999999999998 M441.80 221.89999999999998 L454.40 214.5 M448.10 247.2 V261.2 M441.80 250.5 L454.40 257.9 M441.80 257.9 L454.40 250.5" stroke="#6a9955" stroke-width="2" fill="none"/></svg>
<svg class="a" style="left:0;top:0" width="440" height="170"><path d="M412 159.5 L415.5 163 L420.8 158.6 L426 163" fill="none" stroke="#f44a4a" stroke-width="2.4"/><path d="M413.6 155.6 L423.6 136.3" stroke="#6a9955" stroke-width="2.6" fill="none"/></svg>
<div class="a" style="left:280px;top:310px;width:1332px;height:2px;background:#2b2b2b"></div>
<div class="a ui" style="left:320.5px;top:332.07px;font-size:22px;line-height:28px;letter-spacing:-0.6px;color:#9d9d9d">PROBLEMS</div>
<div class="a ui" style="left:448px;top:330px;width:42px;height:32px;border-radius:16px;background:#0078d4;color:#fff;font-size:21px;line-height:32px;text-align:center">21</div>
<div class="a ui" style="left:533.5px;top:332.07px;font-size:22px;line-height:28px;letter-spacing:0.25px;color:#9d9d9d">OUTPUT</div>
<div class="a ui" style="left:673px;top:332.07px;font-size:22px;line-height:28px;letter-spacing:-0.25px;color:#9d9d9d">DEBUG CONSOLE</div>
<div class="a ui" style="left:911.5px;top:332.07px;font-size:22px;line-height:28px;letter-spacing:-0.2px;color:#e7e7e7">TERMINAL</div>
<div class="a" style="left:907px;top:367px;width:119px;height:2px;background:#0078d4"></div>
<div class="a ui" style="left:1071px;top:332.07px;font-size:22px;line-height:28px;letter-spacing:-0.4px;color:#9d9d9d">PORTS</div>
<div class="a ui" style="left:1193px;top:332.07px;font-size:22px;line-height:28px;letter-spacing:-0.35px;color:#9d9d9d">MEMORY</div>
<div class="a ui" style="left:1339px;top:332.07px;font-size:22px;line-height:28px;letter-spacing:-0.4px;color:#9d9d9d">XRTOS</div>
<div class="t" style="left:404px;top:393.65px">status.ground_bal.ground_phase_low += shift;</div>
<div class="t" style="left:404px;top:421.65px">status.ground_bal.ground_phase_high += shift;</div>
<div class="t" style="left:348px;top:449.65px">}</div>
<div class="t" style="left:348px;top:505.65px"><b>Summary</b></div>
<div class="t" style="left:614px;top:589.65px">Ground Balance Flow</div>
<div class="t" style="left:390px;top:673.65px">1. CALIBRATION (pump coil over ground)</div>
<div class="t" style="left:460px;top:729.65px">Measure phase</div>
<div class="t" style="left:712px;top:729.65px">Accumulate at low freq</div>
<div class="t" style="left:460px;top:757.65px">at each freq</div>
<div class="t" style="left:712px;top:757.65px">Accumulate at high freq</div>
<div class="t" style="left:488px;top:897.65px">Average</div>
<div class="t" style="left:712px;top:897.65px">ground_<i>phase</i>_low  (e.g., 45°)</div>
<div class="t" style="left:488px;top:925.65px">results</div>
<div class="t" style="left:712px;top:925.65px">ground_<i>phase</i>_high (e.g., 52°)</div>
<div class="t" style="left:712px;top:953.65px">ground_<i>slope (0.7 deg/kHz)</i></div>
<div class="t" style="left:390px;top:1009.65px"><i>2. DETECTION (subtract ground response)</i></div>
<div class="t" style="left:460px;top:1065.65px"><i>Raw phase</i></div>
<div class="t" style="left:698px;top:1065.65px"><i>30° @ 5kHz,  40° @ 15kHz</i></div>
<div class="t" style="left:460px;top:1093.65px"><i>measurement</i></div>
<div class="t" style="left:460px;top:1233.65px"><i>Subtract</i></div>
<div class="t" style="left:698px;top:1233.65px"><i>(30–45)° @ 5kHz = –15°</i></div>
<div class="t" style="left:460px;top:1261.65px"><i>ground phase</i></div>
<div class="t" style="left:698px;top:1261.65px"><i>(40–52)° @ 15kHz = –12°</i></div>
<div class="t" style="left:460px;top:1401.65px"><i>Calculate</i></div>
<div class="t" style="left:698px;top:1401.65px"><i>slope = (–12 – –15) / 10</i></div>
<div class="t" style="left:460px;top:1429.65px"><i>phase slope</i></div>
<div class="t" style="left:768px;top:1429.65px"><i>= +0.3 deg/kHz (precious!)</i></div>
<div class="t" style="left:348px;top:1569.65px"><b>Three Modes (Planned)</b></div>
<div class="t" style="left:348px;top:1625.65px">|</div>
<div class="t" style="left:516px;top:1625.65px">|</div>
<div class="t" style="left:1300px;top:1625.65px">|</div>
<div class="t" style="left:376px;top:1625.65px">Mode</div>
<div class="t" style="left:544px;top:1625.65px">Description</div>
<div class="t" style="left:348px;top:1653.65px">|</div>
<div class="t" style="left:516px;top:1653.65px">|</div>
<div class="t" style="left:1300px;top:1653.65px">|</div>
<div class="t" style="left:348px;top:1681.65px">|</div>
<div class="t" style="left:516px;top:1681.65px">|</div>
<div class="t" style="left:1300px;top:1681.65px">|</div>
<div class="t" style="left:376px;top:1681.65px"><b>Manual</b></div>
<div class="t" style="left:544px;top:1681.65px">User adjusts GB with +/– buttons</div>
<div class="t" style="left:348px;top:1709.65px">|</div>
<div class="t" style="left:516px;top:1709.65px">|</div>
<div class="t" style="left:1300px;top:1709.65px">|</div>
<div class="t" style="left:376px;top:1709.65px"><b>Auto–Pump</b></div>
<div class="t" style="left:544px;top:1709.65px">Calibrate by pumping coil over ground (implemented)</div>
<div class="t" style="left:348px;top:1737.65px">|</div>
<div class="t" style="left:516px;top:1737.65px">|</div>
<div class="t" style="left:1300px;top:1737.65px">|</div>
<div class="t" style="left:376px;top:1737.65px"><b>Tracking</b></div>
<div class="t" style="left:544px;top:1737.65px">Continuous auto–adjustment during operation (planned)</div>
<div class="a" style="left:320px;top:1792px;width:392px;height:28px;background:#2e2e2e"></div>
<div class="t" style="left:320px;top:1793.65px;color:#f0f0f0">&gt; how are targets indicated</div>
<svg class="a" style="left:0;top:0" width="1612" height="1828" viewBox="0 0 1612 1828"><g transform="translate(0.5 0.5)"><path d="M355 574 H1167 M355 630 H1167 M355 1526 H1167 M355 573 V1527 M1167 573 V587 M1181 589 V615 M1167 617 V643 M1181 645 V671 M1167 673 V811 M1181 813 V867 M1167 869 V979 M1181 981 V1007 M1167 1009 V1147 M1181 1149 V1203 M1167 1205 V1315 M1181 1317 V1371 M1167 1373 V1483 M1181 1485 V1511 M1167 1513 V1527 M439 714 H649 M439 798 H649 M439 713 V799 M649 713 V799 M439 882 H649 M439 966 H649 M439 881 V967 M649 881 V967 M439 1050 H649 M439 1134 H649 M439 1049 V1135 M649 1049 V1135 M439 1218 H649 M439 1302 H649 M439 1217 V1303 M649 1217 V1303 M439 1386 H649 M439 1470 H649 M439 1385 V1471 M649 1385 V1471 M537 812 V840 M537 1134 V1176 M537 1302 V1344 M656 742 H685 M656 770 H685 M656 910 H685 M656 938 H685 M656 966 H685" fill="none" stroke="#c4c4c4" stroke-width="2"/><path d="M362 1666 H516 M530 1666 H1300" fill="none" stroke="#c4c4c4" stroke-width="2" stroke-dasharray="11 3" stroke-dashoffset="-1"/><path d="M529.5 848 H544.5 L537 863 Z M529.5 1184 H544.5 L537 1199 Z M529.5 1352 H544.5 L537 1367 Z M683 736.5 L698 742 L683 747.5 Z M683 764.5 L698 770 L683 775.5 Z M683 904.5 L698 910 L683 915.5 Z M683 932.5 L698 938 L683 943.5 Z M683 960.5 L698 966 L683 971.5 Z" fill="#c4c4c4"/></g></svg>
</body></html>
